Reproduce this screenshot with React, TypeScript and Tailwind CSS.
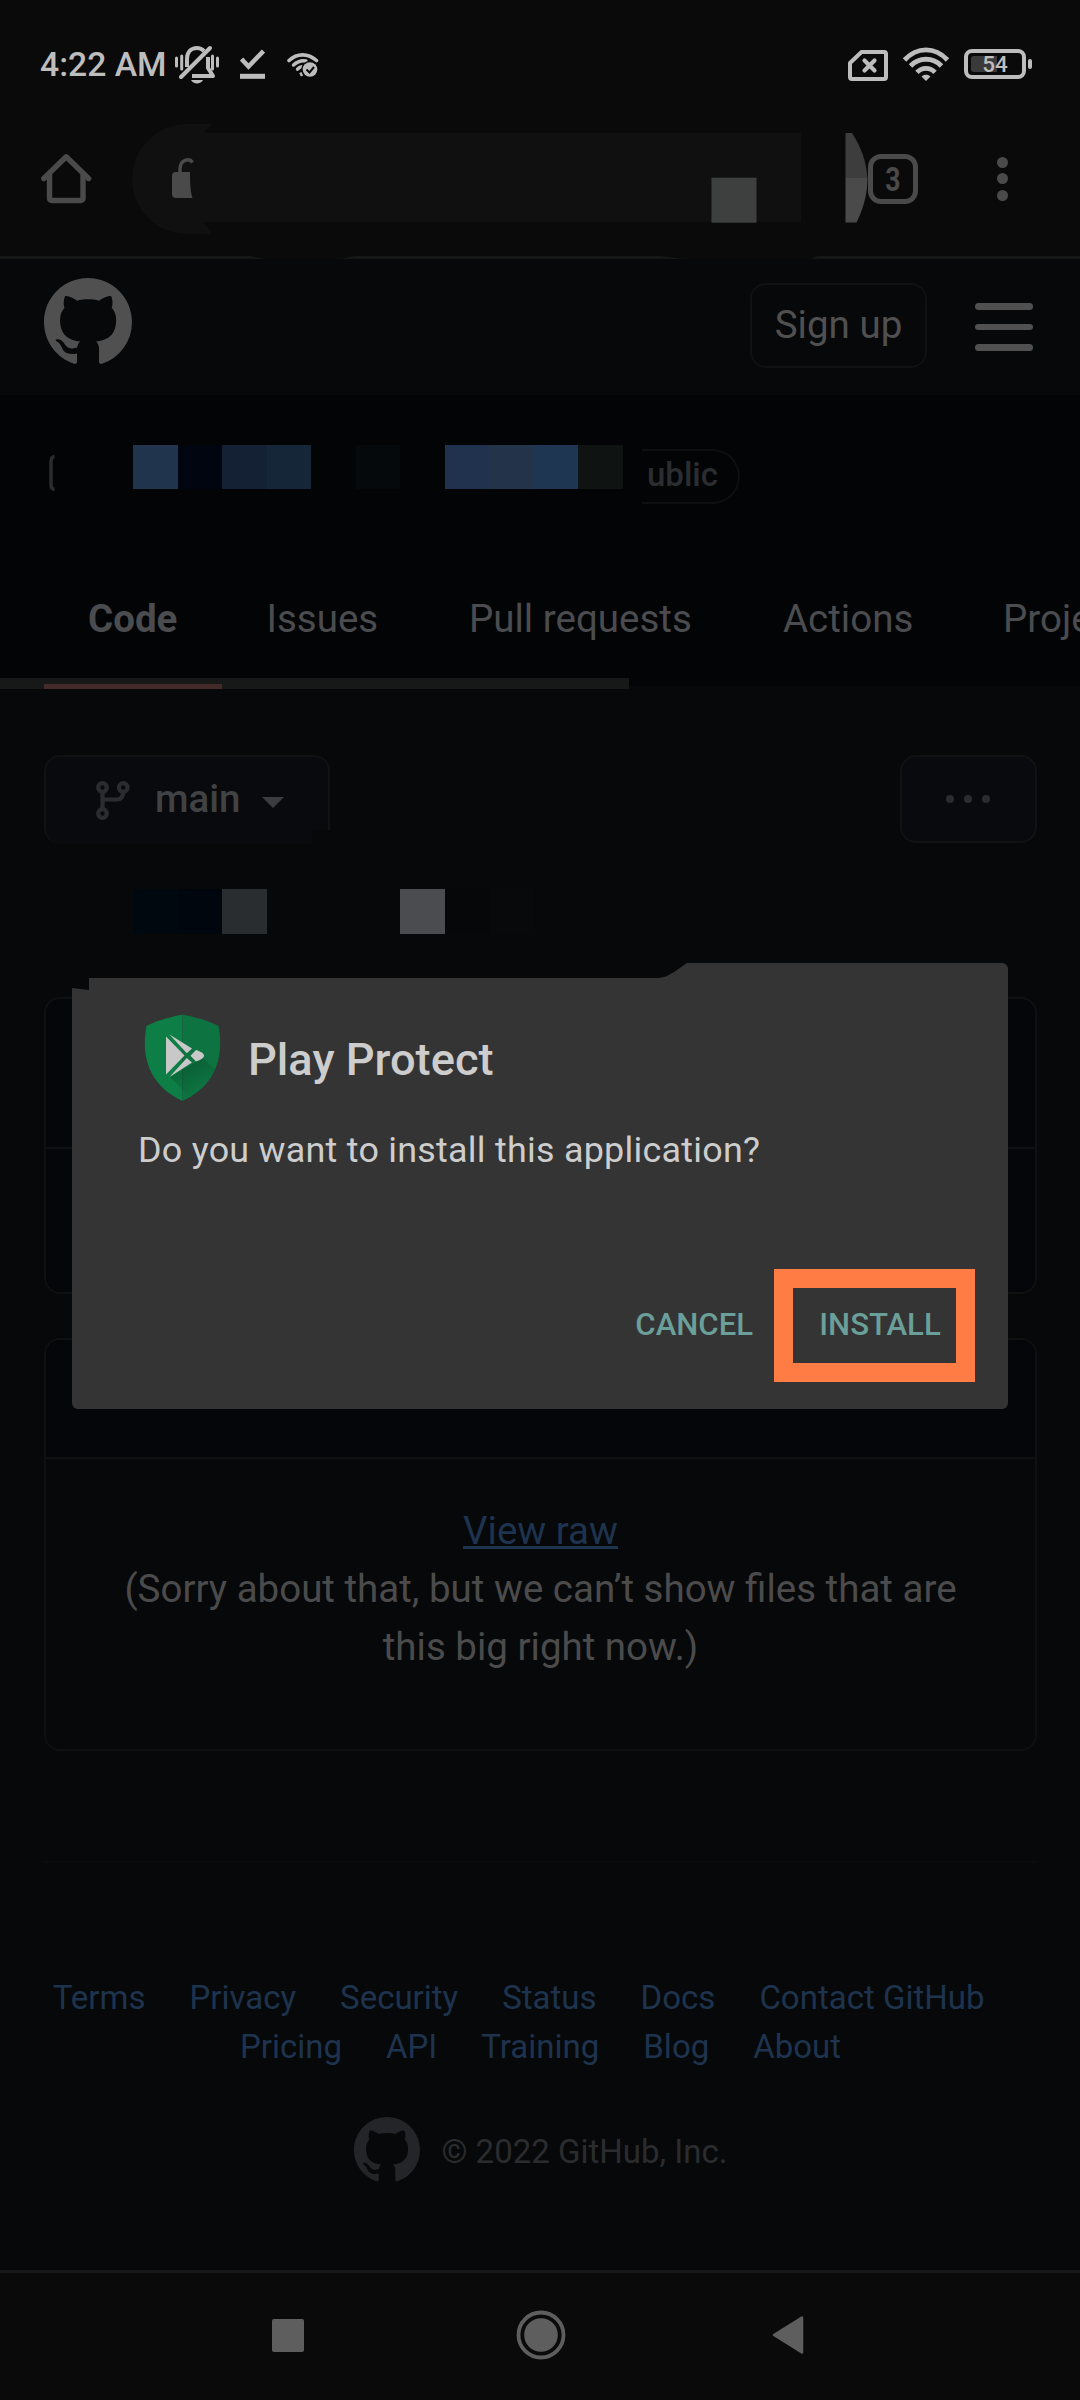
import type { ReactNode } from "react";

const MARK =
  "M8 0C3.58 0 0 3.58 0 8c0 3.54 2.29 6.53 5.47 7.59.4.07.55-.17.55-.38 0-.19-.01-.82-.01-1.49-2.01.37-2.53-.49-2.69-.94-.09-.23-.48-.94-.82-1.13-.28-.15-.68-.52-.01-.53.63-.01 1.08.58 1.23.82.72 1.21 1.87.87 2.33.66.07-.52.28-.87.51-1.07-1.78-.2-3.64-.89-3.64-3.95 0-.87.31-1.59.82-2.15-.08-.2-.36-1.02.08-2.12 0 0 .67-.21 2.2.82.64-.18 1.32-.27 2-.27s1.36.09 2 .27c1.53-1.04 2.2-.82 2.2-.82.44 1.1.16 1.92.08 2.12.51.56.82 1.27.82 2.15 0 3.07-1.87 3.75-3.65 3.95.29.25.54.73.54 1.48 0 1.07-.01 1.93-.01 2.2 0 .21.15.46.55.38A8.01 8.01 0 0016 8c0-4.42-3.58-8-8-8z";

function GitHubMark({ className }: { className: string }) {
  return (
    <svg viewBox="0 0 16 16" className={className} fill="currentColor">
      <path d={MARK} />
    </svg>
  );
}

function StatusBar() {
  return (
    <div className="flex h-[124px] items-start pl-10 text-[#bdbdbd]">
      <span className="mt-[45px] w-[132px] whitespace-nowrap text-[33.700px] font-medium leading-10">4:22 AM</span>
      {/* silent bell */}
      <svg className="ml-[3px] mt-[44px] h-10 w-11 shrink-0" viewBox="0 0 44 40" fill="none" stroke="currentColor">
        <path d="M1.500 14v8M6.700 12v13M37.500 12v13M42.500 14v8" strokeWidth="3" strokeLinecap="round" />
        <path d="M12 23V15C12 8 16 4 22 4c3 0 5 1 7 3M33 13v11l5 8H17" strokeWidth="4" strokeLinejoin="round" />
        <path d="M35 4L6 33" strokeWidth="4" strokeLinecap="round" />
        <path d="M16 36h12c-2 4.500-10 4.500-12 0z" fill="currentColor" stroke="none" />
      </svg>
      <svg className="ml-[21px] mt-[49px] h-[31px] w-[25px] shrink-0" viewBox="0 0 25 31" fill="none" stroke="currentColor">
        <path d="M1.500 10l7 7.500L23.500 2" strokeWidth="4.600" />
        <path d="M0 27.300h25" strokeWidth="5" />
      </svg>
      <svg className="ml-[22px] mt-[52px] h-[26px] w-[32px] shrink-0" viewBox="0 0 32 26" fill="none" stroke="currentColor">
        <path d="M2 8.500C10 1 21 1 29.500 8.500" strokeWidth="3.600" strokeLinecap="round" />
        <path d="M6.500 13C11 9 15 8.300 19 9M10.500 17.200C12 15.500 13.500 15 15 14.700" strokeWidth="3.400" strokeLinecap="round" />
        <path d="M13.500 20.500l1.500 3.500" strokeWidth="2.500" />
        <circle cx="23" cy="17.500" r="8.800" fill="#0a0a0a" stroke="none" />
        <circle cx="23" cy="17.500" r="7.300" fill="currentColor" stroke="none" />
        <path d="M19.500 17.500l3 3 4.500-5.500" stroke="#0a0a0a" strokeWidth="2" />
      </svg>
      <svg className="ml-[529px] mt-[50px] h-[31px] w-10 shrink-0" viewBox="0 0 40 31" fill="none" stroke="currentColor">
        <path d="M13.500 2H36a2 2 0 0 1 2 2v23a2 2 0 0 1-2 2H4a2 2 0 0 1-2-2V13z" strokeWidth="4" strokeLinejoin="round" />
        <path d="M16.500 10.500l10 10M26.500 10.500l-10 10" strokeWidth="4.200" strokeLinecap="round" />
      </svg>
      <svg className="ml-[15px] mt-[47px] h-[35px] w-[46px] shrink-0" viewBox="0 0 46 35" fill="none" stroke="currentColor" strokeWidth="4.800">
        <path d="M1.500 13C14 -0.500 32 -0.500 44.500 13" />
        <path d="M7.500 19C16 10 30 10 38.500 19" />
        <path d="M14 25.300C19 20 27 20 32 25.300" />
        <path d="M18.500 29.500C21 27 25 27 27.500 29.500L23 34z" fill="currentColor" stroke="none" />
      </svg>
      <div className="relative ml-[15px] mt-[49px] flex h-[30px] w-[62px] shrink-0 items-center justify-center rounded-[8px] border-4 border-[#bdbdbd]">
        <div className="absolute left-[3px] top-[3px] h-4 w-[26px] rounded-l-[3px] bg-[#3a3a3a]" />
        <span className="relative mt-px text-[22.500px] font-medium leading-none">54</span>
      </div>
      <div className="ml-[2px] mt-[59px] h-[10px] w-1 shrink-0 rounded-sm bg-[#bdbdbd]" />
    </div>
  );
}

function BrowserBar() {
  return (
    <div className="flex h-[132px] items-start text-[#4a4a4a]">
      <svg className="ml-[41px] mt-[29px] h-[51px] w-[51px] shrink-0" viewBox="0 0 51 51" fill="none" stroke="currentColor" strokeWidth="5.400" strokeLinejoin="round" strokeLinecap="round">
        <path d="M2.800 25.500L25.200 3.800 47.600 25.500" />
        <path d="M8.500 21v24.500a2 2 0 0 0 2 2h29.500a2 2 0 0 0 2-2V21" />
      </svg>
      {/* address field with its text painted over */}
      <svg className="ml-10 h-[110px] w-[736px] shrink-0" viewBox="0 0 736 110">
        <path d="M80 0H55a55 55 0 0 0 0 110H80L72 98H669V9H72z" fill="#101010" />
        <path d="M48 49v-4c0-10 9.500-11 12.500-6.500" fill="none" stroke="#4a4a4a" strokeWidth="3.500" />
        <path d="M44 48h14c0 8 0 18 2.500 26H44q-4 0-4-4V52q0-4 4-4z" fill="#4a4a4a" />
        <rect x="579.500" y="53.700" width="45" height="45" fill="#3e403f" />
        <path d="M713.500 9h6.500c9 14 14 27 15.500 45h-22z" fill="#3d3d3d" />
        <path d="M713.500 54h22c0 17-4.500 31-11 44.500h-11z" fill="#4a4a4a" />
      </svg>
      <div className="mt-[30px] flex h-[50px] w-[50px] shrink-0 items-center justify-center rounded-[13px] border-[5.500px] border-[#4a4a4a]">
        <span className="scale-x-[0.78] text-[34px] font-bold leading-none">3</span>
      </div>
      <div className="ml-[79px] mt-[32.500px] flex flex-col gap-[5.200px]">
        <i className="h-[11.400px] w-[11.400px] rounded-full bg-[#4a4a4a]" />
        <i className="h-[11.400px] w-[11.400px] rounded-full bg-[#4a4a4a]" />
        <i className="h-[11.400px] w-[11.400px] rounded-full bg-[#4a4a4a]" />
      </div>
    </div>
  );
}

function SiteHeader() {
  return (
    <header className="flex h-[136px] items-center bg-[#07080a] pl-11 pr-[47px] text-[#505050]">
      <GitHubMark className="-mt-[10px] h-[88px] w-[88px]" />
      <div className="mb-[3px] ml-auto flex h-[85px] w-[177px] items-center justify-center rounded-[16px] border-2 border-[#101113] text-[38.500px] leading-none">
        Sign up
      </div>
      <div className="ml-12 flex w-[58px] flex-col gap-[14px]">
        <i className="h-[6.500px] rounded-full bg-[#505050]" />
        <i className="h-[6.500px] rounded-full bg-[#505050]" />
        <i className="h-[6.500px] rounded-full bg-[#505050]" />
      </div>
    </header>
  );
}

function RepoTitle() {
  return (
    <div className="flex h-[170px] items-start pt-[49.500px]">
      <svg className="ml-[48px] mt-[10px] h-9 w-[7px]" viewBox="0 0 7 36" fill="none" stroke="#2a2d2e" strokeWidth="3.500">
        <path d="M6.500 1.500Q3 2 3 7v22q0 5 3.500 5.500" />
      </svg>
      <div className="ml-[78px] flex h-[44.500px]">
        <i className="w-[44.500px] bg-[#20344d]" />
        <i className="w-[44.500px] bg-[#00050f]" />
        <i className="w-[44.500px] bg-[#142134]" />
        <i className="w-[44.500px] bg-[#152638]" />
        <i className="ml-[44.500px] w-[44.500px] bg-[#06090b]" />
        <i className="ml-[44.500px] w-[44.500px] bg-[#20324d]" />
        <i className="w-[44.500px] bg-[#22334a]" />
        <i className="w-[44.500px] bg-[#1f3652]" />
        <i className="w-[44.500px] bg-[#0f1312]" />
      </div>
      <div className="ml-[19.500px] mt-[4px] flex h-[55px] w-[98px] items-center rounded-r-full border-2 border-l-0 border-[#0d0f11] pb-[3px] pl-[5px] text-[33px] font-medium leading-none text-[#2b2d31]">
        ublic
      </div>
    </div>
  );
}

function Tabs() {
  return (
    <>
      <nav className="flex h-[113px] items-center overflow-hidden whitespace-nowrap pb-[4px] pl-[88px] text-[38.500px] leading-none text-[#4b4c4f]">
        <span className="w-[178.500px] shrink-0 font-bold">Code</span>
        <span className="w-[202.500px] shrink-0">Issues</span>
        <span className="w-[314px] shrink-0">Pull requests</span>
        <span className="w-[220px] shrink-0">Actions</span>
        <span className="shrink-0">Projects</span>
      </nav>
      <div className="flex h-[11px] w-full items-end border-b-[3px] border-[#08090a]">
        <div className="-mb-[3px] flex h-[11px] w-[629px] items-end bg-[#171918] pl-11">
          <i className="h-[5px] w-[178px] bg-[#452a2a]" />
        </div>
      </div>
    </>
  );
}

function BranchRow() {
  return (
    <div className="flex h-[90px] items-start justify-between pl-11 pr-[43px]">
      <div className="relative flex h-[89px] w-[286px] items-center rounded-t-[16px] rounded-bl-[16px] border-2 border-b-0 border-[#111214] bg-[#090a0e] pl-[50px] text-[#404244]">
        <svg className="h-[39px] w-[34px]" viewBox="0 0 34 39" fill="none" stroke="#2a2d2f" strokeWidth="4.200">
          <circle cx="6.500" cy="6.500" r="4.300" />
          <circle cx="27.200" cy="6.500" r="4.300" />
          <circle cx="6.500" cy="32.500" r="4.300" />
          <path d="M6.500 11v17M27.200 11q0 7.500-6.500 7.500H10q-3.500 0-3.500 3" />
        </svg>
        <span className="-mt-[2px] ml-[25px] text-[38.500px] font-medium leading-none">main</span>
        <svg className="ml-[21px] mt-[4px] h-[11px] w-[22px]" viewBox="0 0 22 11">
          <path d="M0 0h22L11 11z" fill="#3a3d40" />
        </svg>
        <div className="absolute -right-[2px] bottom-0 h-[14px] w-[18px] bg-[#07080a]" />
      </div>
      <div className="flex h-[88px] w-[137px] items-center justify-center gap-[10px] rounded-[16px] border-2 border-[#111214] bg-[#090a0e] pr-[2px]">
        <i className="h-2 w-2 rounded-full bg-[#2a2d2f]" />
        <i className="h-2 w-2 rounded-full bg-[#2a2d2f]" />
        <i className="h-2 w-2 rounded-full bg-[#2a2d2f]" />
      </div>
    </div>
  );
}

function LinkRow({ items, className }: { items: string[]; className: string }) {
  return (
    <div className={className}>
      {items.map((t) => (
        <span key={t}>{t}</span>
      ))}
    </div>
  );
}

function Shield() {
  return (
    <svg className="h-[87px] w-[77px]" viewBox="0 0 77 87">
      <defs>
        <clipPath id="shield">
          <path d="M38.500 0.500C27 3 12 6.500 2.500 12-4 46 8 73 38.500 87 69 73 81 46 74.500 12 65 6.500 50 3 38.500 0.500z" />
        </clipPath>
        <linearGradient id="fade" gradientUnits="userSpaceOnUse" x1="42" y1="50" x2="58" y2="74">
          <stop offset="0" stopColor="#00331a" stopOpacity="0.320" />
          <stop offset="1" stopColor="#00331a" stopOpacity="0" />
        </linearGradient>
      </defs>
      <g clipPath="url(#shield)">
        <rect width="38.500" height="87" fill="#0d7f46" />
        <rect x="38.500" width="38.500" height="87" fill="#0d7340" />
        <path d="M26 63L59 44l25 24v30H60z" fill="url(#fade)" />
      </g>
      <g fill="#c8c8c8">
        <path d="M22 22.500v38L40.500 41.500z" />
        <path d="M25.500 20.500L48 34.500l-5.200 4.800z" />
        <path d="M25.500 63L42.800 44l5.200 4.500z" />
        <path d="M52 36C57 37.500 60 39.500 60 41.800s-3 4-8 5.700L46.500 41.700z" />
      </g>
    </svg>
  );
}

function DialogButton({ children, className }: { children: ReactNode; className: string }) {
  return <button className={className}>{children}</button>;
}

function Dialog() {
  return (
    <div className="absolute left-[72px] top-[963px] h-[446px] w-[936px] rounded-[6px]">
      <div className="h-full rounded-[6px] bg-[#343434] [clip-path:polygon(0_25px,17px_27px,17px_15px,587px_15px,594px_13.500px,602px_9px,615px_0,100%_0,100%_100%,0_100%)]">
        <div className="flex h-[134px] items-start pl-[71.500px] pt-[50.500px]">
          <Shield />
          <h1 className="ml-[27.500px] mt-[20px] whitespace-nowrap text-[45.200px] font-medium leading-[52px] text-[#cdcdcd]">Play Protect</h1>
        </div>
        <p className="whitespace-nowrap pl-[66px] pt-[31px] text-[35.900px] leading-[44px] tracking-[0.250px] text-[#cdcdcd]">
          Do you want to install this application?
        </p>
        <div className="mt-[97px] flex h-[113px] items-center justify-end pr-[33px] text-[31.100px] font-medium leading-none text-[#6b9f99]">
          <DialogButton className="mb-px mr-[21px]">CANCEL</DialogButton>
          <DialogButton className="flex h-[113px] w-[201px] items-center justify-center border-[19.500px] border-[#ff7c45] pb-px pl-[11px]">
            INSTALL
          </DialogButton>
        </div>
      </div>
    </div>
  );
}

export default function App() {
  return (
    <div
      className="relative h-[2400px] w-[1080px] overflow-hidden bg-[#07080a]"
      style={{ fontFamily: 'Roboto, "Liberation Sans", sans-serif' }}
    >
      <div className="bg-[#0a0a0a]">
        <StatusBar />
        <BrowserBar />
      </div>
      <svg className="block h-[3px] w-full bg-[#151716]" viewBox="0 0 1080 3">
        <path d="M250 0h105l-14 3h-76zM660 0h158l-8 3H684z" fill="#0a0a0a" />
      </svg>
      <SiteHeader />
      <div className="bg-[#030406]">
        <RepoTitle />
        <Tabs />
      </div>
      <div className="pt-[66px]">
        <BranchRow />
      </div>
      <div className="mt-11 flex h-[45px] pl-[133px]">
        <i className="w-[44.500px] bg-[#00080f]" />
        <i className="w-[44.500px] bg-[#00060d]" />
        <i className="w-[44.500px] bg-[#2a2d2f]" />
        <i className="ml-[133.500px] w-[44.500px] bg-[#4b4c50]" />
        <i className="w-[44.500px] bg-[#060709]" />
        <i className="w-[44.500px] bg-[#08090b]" />
      </div>
      <div className="ml-11 mt-[63px] h-[297px] w-[993px] rounded-[16px] border-2 border-[#0f1012] bg-[#05060a]">
        <div className="h-[150px] border-b-2 border-[#0f1012]" />
      </div>
      <div className="ml-11 mt-[44px] h-[413px] w-[993px] rounded-[16px] border-2 border-[#0f1012]">
        <div className="h-[119px] rounded-t-[14px] border-b-2 border-[#0f1012] bg-[#05060a]" />
        <div className="pt-[43px] text-center text-[38.500px] leading-[57.750px] text-[#4b4b4c]">
          <a className="text-[#1e334d] underline decoration-[3px] underline-offset-[2px]">View raw</a>
          <p>
            (Sorry about that, but we can’t show files that are
            <br />
            this big right now.)
          </p>
        </div>
      </div>
      <footer className="mt-[110px] text-[33px] leading-[49px] text-[#1e334d]">
        <div className="ml-11 h-[2px] w-[993px] bg-[#0a0b0c]" />
        <LinkRow className="flex gap-11 whitespace-nowrap pl-[52.700px] pt-[110px]" items={["Terms", "Privacy", "Security", "Status", "Docs", "Contact GitHub"]} />
        <LinkRow className="flex justify-center gap-11 pl-px" items={["Pricing", "API", "Training", "Blog", "About"]} />
        <div className="mt-[46px] flex h-[66px] items-center pl-[354px] text-[#2b2c2e]">
          <GitHubMark className="h-[66px] w-[66px] text-[#242529]" />
          <span className="ml-[21.500px] mt-[3px]">© 2022 GitHub, Inc.</span>
        </div>
      </footer>
      <div className="mt-[87px] flex h-[130px] items-center border-t-[3px] border-[#171918] bg-[#0a0a0a] pb-[3px] text-[#5e5e5e]">
        <i className="ml-[272px] h-[33px] w-8 rounded-[2px] bg-[#5e5e5e]" />
        <svg className="ml-[211.500px] h-[50px] w-[50px]" viewBox="0 0 50 50">
          <circle cx="25" cy="25" r="22.500" fill="none" stroke="currentColor" strokeWidth="3.800" />
          <circle cx="25" cy="25" r="16.800" fill="currentColor" />
        </svg>
        <svg className="ml-[206px] h-[38px] w-8" viewBox="0 0 32 38">
          <path d="M30 1.500v35L2 19z" fill="currentColor" stroke="currentColor" strokeWidth="2.500" strokeLinejoin="round" />
        </svg>
      </div>
      <Dialog />
    </div>
  );
}
